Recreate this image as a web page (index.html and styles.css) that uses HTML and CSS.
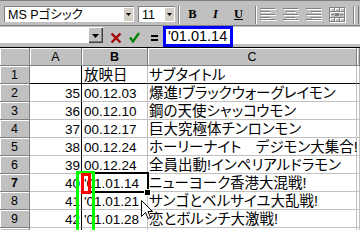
FILE: index.html
```html
<!DOCTYPE html>
<html lang="ja">
<head>
<meta charset="utf-8">
<title>Excel</title>
<link rel="stylesheet" href="styles.css">
</head>
<body>
<div class="app">
  <div class="toolbar">
    <div class="combo combo-font"><span class="combo-text">MS Pゴシック</span><span class="drop"><svg width="5" height="3" viewBox="0 0 5 3"><path d="M0 0h5L2.5 3z" fill="#000"/></svg></span></div>
    <div class="combo combo-size"><span class="combo-text">11</span><span class="drop"><svg width="5" height="3" viewBox="0 0 5 3"><path d="M0 0h5L2.5 3z" fill="#000"/></svg></span></div>
    <span class="sep sep-a"></span>
    <span class="tbtn tb-bold">B</span>
    <span class="tbtn tb-italic">I</span>
    <span class="tbtn tb-under">U</span>
    <span class="sep sep-b"></span>
    <span class="tbtn"><svg width="17" height="13" viewBox="0 0 17 13" shape-rendering="crispEdges"><g fill="#fff"><rect x="1" y="1" width="15" height="1"/><rect x="1" y="4" width="10" height="1"/><rect x="1" y="7" width="15" height="1"/><rect x="1" y="10" width="10" height="1"/><rect x="1" y="12" width="15" height="1"/></g><g fill="#808080"><rect x="0" y="0" width="15" height="1"/><rect x="0" y="3" width="10" height="1"/><rect x="0" y="6" width="15" height="1"/><rect x="0" y="9" width="10" height="1"/><rect x="0" y="11" width="15" height="1"/></g></svg></span>
    <span class="tbtn"><svg width="17" height="13" viewBox="0 0 17 13" shape-rendering="crispEdges"><g fill="#fff"><rect x="1" y="1" width="15" height="1"/><rect x="4" y="4" width="9" height="1"/><rect x="1" y="7" width="15" height="1"/><rect x="4" y="10" width="9" height="1"/><rect x="1" y="12" width="15" height="1"/></g><g fill="#808080"><rect x="0" y="0" width="15" height="1"/><rect x="3" y="3" width="9" height="1"/><rect x="0" y="6" width="15" height="1"/><rect x="3" y="9" width="9" height="1"/><rect x="0" y="11" width="15" height="1"/></g></svg></span>
    <span class="tbtn"><svg width="17" height="13" viewBox="0 0 17 13" shape-rendering="crispEdges"><g fill="#fff"><rect x="1" y="1" width="15" height="1"/><rect x="6" y="4" width="10" height="1"/><rect x="1" y="7" width="15" height="1"/><rect x="6" y="10" width="10" height="1"/><rect x="1" y="12" width="15" height="1"/></g><g fill="#808080"><rect x="0" y="0" width="15" height="1"/><rect x="5" y="3" width="10" height="1"/><rect x="0" y="6" width="15" height="1"/><rect x="5" y="9" width="10" height="1"/><rect x="0" y="11" width="15" height="1"/></g></svg></span>
    <span class="tbtn"><svg width="17" height="16" viewBox="0 0 17 16" shape-rendering="crispEdges"><g fill="none" stroke="#fff" transform="translate(1 1)"><rect x="0.5" y="0.5" width="15" height="14"/><path d="M0 4.5h16M0 10.5h16M5.5 0v4M10.5 0v4M5.5 11v4M10.5 11v4"/></g><g fill="none" stroke="#808080"><rect x="0.5" y="0.5" width="15" height="14"/><path d="M0 4.5h16M0 10.5h16M5.5 0v4M10.5 0v4M5.5 11v4M10.5 11v4M2 7.5h3M11 7.5h3"/></g><rect x="6" y="6" width="4" height="3" fill="#808080"/></svg></span>
    <span class="sep sep-c"></span>
    <span class="edge"></span>
  </div>
  <div class="formulabar">
    <div class="namebox"></div>
    <div class="namedrop"><svg width="7" height="4" viewBox="0 0 7 4"><path d="M0 0h7L3.5 4z" fill="#000"/></svg></div>
    <svg class="ic-x" width="12" height="12" viewBox="0 0 12 12"><path d="M1.5 1.5L10.5 10.5M10.5 1.5L1.5 10.5" stroke="#a80000" stroke-width="2.4" fill="none"/></svg>
    <svg class="ic-ok" width="11" height="11" viewBox="0 0 11 11"><path d="M1 5.5L4 9.5L10 1" stroke="#008000" stroke-width="2.2" fill="none"/></svg>
    <svg class="ic-eq" width="7" height="6" viewBox="0 0 7 6"><rect x="0" y="0" width="7" height="2" fill="#000"/><rect x="0" y="4" width="7" height="2" fill="#000"/></svg>
    <div class="formula"><span class="formula-text">'01.01.14</span></div>
  </div>
  <div class="sheet">
    <div class="hd corner"></div><div class="hd">A</div><div class="hd hd-sel">B</div><div class="hd">C</div><div class="hd"></div>

    <div class="hd rh">1</div><div class="c num r1"></div><div class="c txt jp r1">放映日</div><div class="c ttl jp r1">サブタイトル</div><div class="c r1"></div>
    <div class="hd rh">2</div><div class="c num">35</div><div class="c txt">00.12.03</div><div class="c ttl jp">爆進!ブラックウォーグレイモン</div><div class="c"></div>
    <div class="hd rh">3</div><div class="c num">36</div><div class="c txt">00.12.10</div><div class="c ttl jp">鋼の天使シャッコウモン</div><div class="c"></div>
    <div class="hd rh">4</div><div class="c num">37</div><div class="c txt">00.12.17</div><div class="c ttl jp">巨大究極体チンロンモン</div><div class="c"></div>
    <div class="hd rh">5</div><div class="c num">38</div><div class="c txt">00.12.24</div><div class="c ttl jp">ホーリーナイト　デジモン大集合!</div><div class="c"></div>
    <div class="hd rh">6</div><div class="c num">39</div><div class="c txt">00.12.24</div><div class="c ttl jp">全員出動!インペリアルドラモン</div><div class="c"></div>
    <div class="hd rh hd-sel">7</div><div class="c num">40</div><div class="c txt">'01.01.14</div><div class="c ttl jp">ニューヨーク香港大混戦!</div><div class="c"></div>
    <div class="hd rh">8</div><div class="c num">41</div><div class="c txt">'01.01.21</div><div class="c ttl jp">サンゴとベルサイユ大乱戦!</div><div class="c"></div>
    <div class="hd rh">9</div><div class="c num">42</div><div class="c txt">'01.01.28</div><div class="c ttl jp">恋とボルシチ大激戦!</div><div class="c"></div>
    <div class="hd rh"></div><div class="c num"></div><div class="c txt"></div><div class="c ttl"></div><div class="c"></div>
  </div>

  <div class="formula-mark"></div>
  <div class="sel"></div>
  <div class="handle"></div>
  <div class="mark-green"></div>
  <div class="mark-red"></div>
  <svg class="cursor" width="12" height="19" viewBox="0 0 12 19"><path d="M0.5 0.5V16.5L4.5 12.5L7 18.5L9.5 17.5L7 11.5H11.5Z" fill="#fff" stroke="#000" stroke-width="1"/></svg>
</div>
</body>
</html>
```
FILE: styles.css
```css
* { box-sizing: border-box; }
html, body { margin: 0; padding: 0; }
body {
  width: 360px;
  height: 230px;
  overflow: hidden;
  background: #c0c0c0;
  font-family: "Liberation Sans", "Noto Sans CJK JP", sans-serif;
  color: #000;
}
.app {
  position: relative;
  width: 360px;
  height: 230px;
  overflow: hidden;
  background: #c0c0c0;
}

/* toolbar */
.toolbar {
  display: flex;
  align-items: flex-start;
  height: 26px;
  border-top: 1px solid #808080;
  border-bottom: 1px solid #808080;
  padding: 5px 0 0 4px;
}
.combo {
  position: relative;
  height: 16px;
  background: #fff;
  border-top: 1px solid #808080;
  border-left: 1px solid #808080;
  display: flex;
  align-items: center;
  padding-left: 3px;
  font-size: 12.5px;
  line-height: 14px;
  font-feature-settings: "palt";
  white-space: nowrap;
}
.combo-font { width: 130px; }
.combo-size { width: 37px; margin-left: 4px; }
.drop {
  position: absolute;
  right: 1px;
  top: 1px;
  width: 9px;
  height: 13px;
  background: #d4d0c8;
  display: flex;
  align-items: center;
  justify-content: center;
}
.drop svg { display: block; }
.sep {
  width: 2px;
  height: 18px;
  border-left: 1px solid #808080;
  border-right: 1px solid #fff;
}
.sep-a { margin-left: 3px; }
.sep-b { margin-left: 5px; }
.sep-c { margin-left: 4px; }
.edge {
  width: 1px;
  height: 18px;
  margin-left: 3px;
  background: #808080;
}
.tbtn {
  width: 23px;
  height: 17px;
  display: flex;
  align-items: center;
  justify-content: center;
}
.tbtn svg { display: block; }
.sep-a + .tbtn { margin-left: 1px; }
.tb-bold, .tb-italic, .tb-under {
  font-family: "Liberation Serif", serif;
  font-weight: bold;
  font-size: 12.5px;
}
.tb-italic { font-style: italic; }
.tb-under { text-decoration: underline; }

/* formula bar */
.formulabar {
  display: flex;
  align-items: flex-start;
  height: 21px;
  padding-top: 1px;
}
.namebox {
  width: 88px;
  height: 16px;
  background: #fff;
}
.namedrop {
  width: 15px;
  height: 16px;
  background: #c0c0c0;
  box-shadow: inset 1px 1px 0 #fff, inset -1px -1px 0 #404040, inset -2px -2px 0 #808080;
  display: flex;
  align-items: center;
  justify-content: center;
}
.namedrop svg { display: block; margin-top: 1px; }
.ic-x { margin: 5px 0 0 7px; }
.ic-ok { margin: 5px 0 0 7px; }
.ic-eq { margin: 8px 0 0 11px; }
.formula {
  margin-left: 5px;
  width: 197px;
  height: 17px;
  background: #fff;
  padding: 1px 0 0 5px;
  font-size: 14.5px;
  line-height: 17px;
  white-space: nowrap;
}

/* sheet */
.sheet {
  display: grid;
  grid-template-columns: 30px 52px 66px 209px 3px;
  grid-template-rows: repeat(11, 18px);
  border-top: 1px solid #000;
  background: #fff;
}
.hd {
  background: #c0c0c0;
  border-right: 1px solid #808080;
  border-bottom: 1px solid #808080;
  box-shadow: inset 1px 1px 0 #fff;
  display: flex;
  align-items: center;
  justify-content: center;
  font-size: 12.5px;
  line-height: 14px;
  padding-top: 1px;
}
.hd-sel { font-weight: bold; }
.c {
  border-right: 1px solid #c0c0c0;
  border-bottom: 1px solid #c0c0c0;
  display: flex;
  align-items: flex-end;
  font-size: 13.5px;
  line-height: 13px;
  white-space: nowrap;
  padding-bottom: 1px;
}
.num {
  justify-content: flex-end;
  padding-right: 1px;
  border-right-color: #000;
}
.txt { padding-left: 2px; }
.ttl { padding-left: 1px; }
.jp {
  font-size: 14.5px;
  font-feature-settings: "palt";
}
.r1 { border-bottom-color: #000; }

/* overlays */
.formula-mark {
  position: absolute;
  left: 163px;
  top: 26px;
  width: 70px;
  height: 21px;
  border: 3px solid #0000ff;
}
.sel {
  position: absolute;
  left: 81px;
  top: 172px;
  width: 68px;
  height: 21px;
  border: 2px solid #000;
}
.handle {
  position: absolute;
  left: 145px;
  top: 190px;
  width: 5px;
  height: 5px;
  background: #000;
  box-shadow: 0 0 0 1px #fff;
}
.mark-green {
  position: absolute;
  left: 76px;
  top: 171px;
  width: 19px;
  height: 64px;
  border: 3px solid #00ff00;
}
.mark-red {
  position: absolute;
  left: 81px;
  top: 173px;
  width: 10px;
  height: 21px;
  border: 3px solid #ff0000;
}
.cursor {
  position: absolute;
  left: 141px;
  top: 200px;
  display: block;
}
```
